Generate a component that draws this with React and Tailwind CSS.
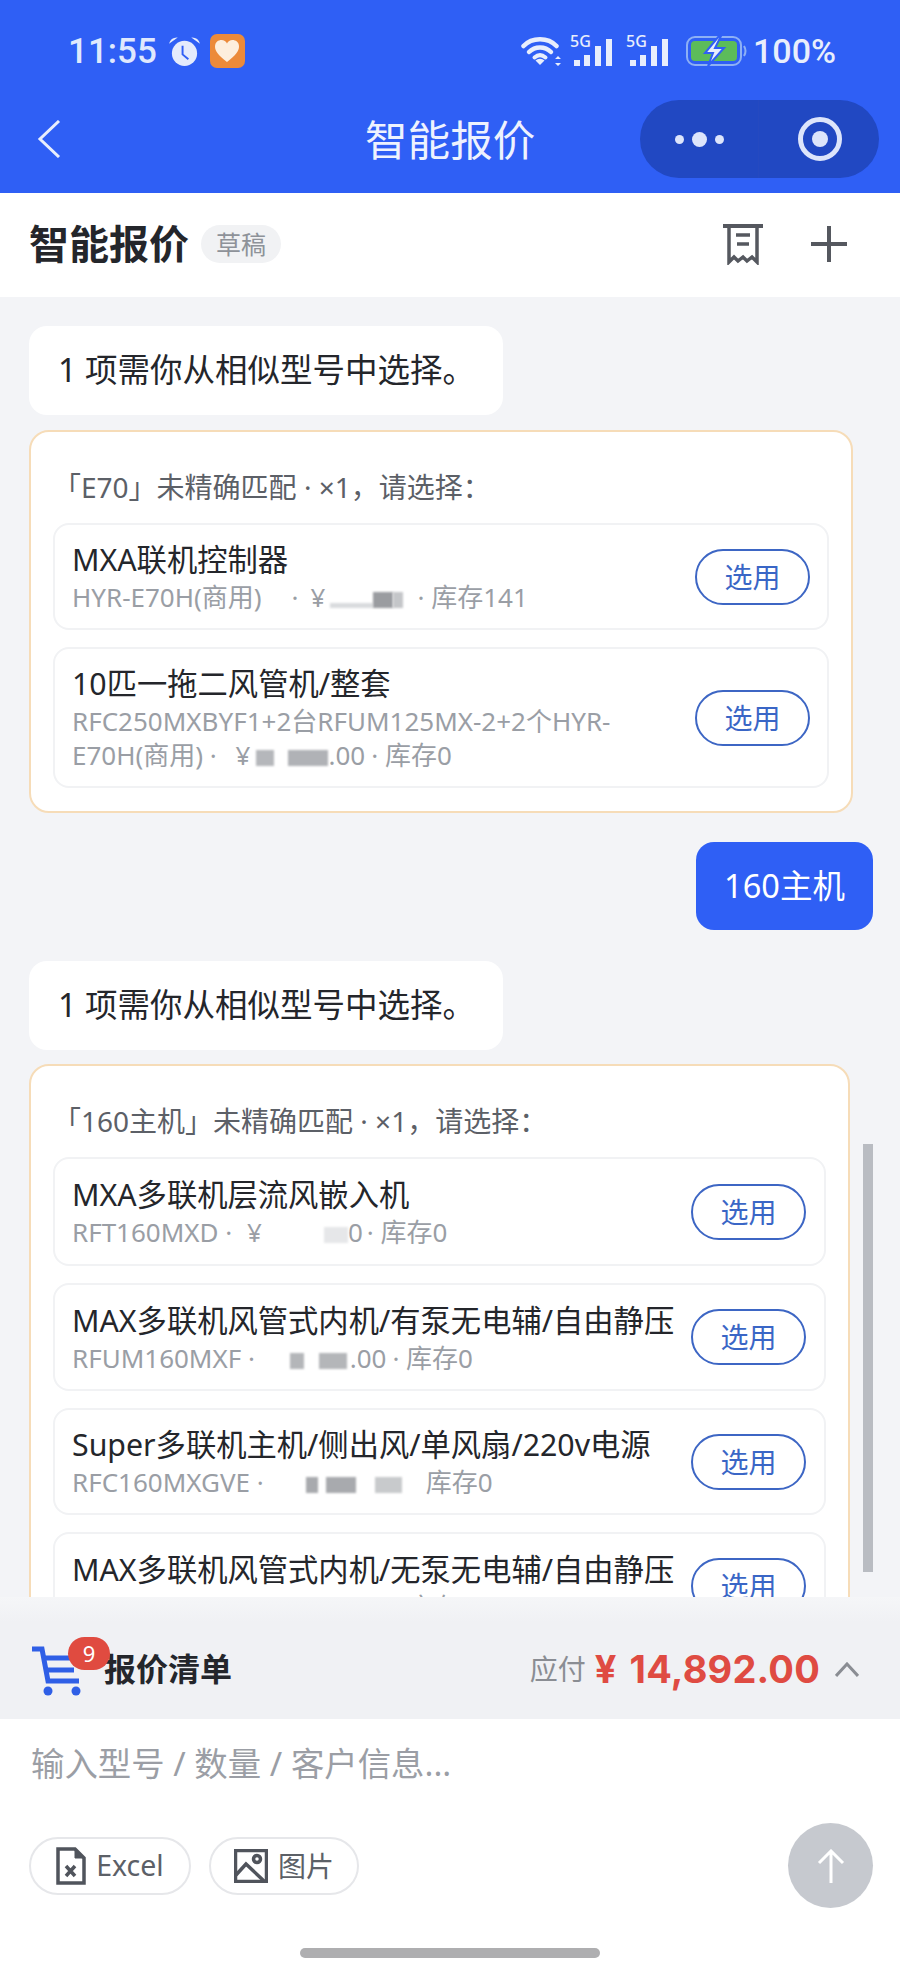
import React from "react";

const FONT = '"Noto Sans","Noto Sans CJK SC",sans-serif';

function Blur({ w, c = "#9a9ca0", ml = 0, h = 16 }) {
  return (
    <span
      className="inline-block blur-[1px] align-[-1px]"
      style={{ width: w, height: h, background: c, marginLeft: ml }}
    />
  );
}

function Pick() {
  return (
    <button className="shrink-0 w-[115px] h-[56px] rounded-full border-2 border-[#3d66c4] bg-white text-[28px] leading-none text-[#3a66c6] flex items-center justify-center">
      选用
    </button>
  );
}

function Row({ title, sub, h, pr = 17 }) {
  return (
    <div className="flex items-center justify-between rounded-[16px] border-2 border-[#f1f2f4] bg-white pl-[17px]" style={{ height: h, paddingRight: pr }}>
      <div className="min-w-0 mt-[2px]">
        <div className="text-[30.3px] leading-[38px] text-[#24262b] whitespace-nowrap">{title}</div>
        <div className="text-[26px] leading-[34px] text-[#9a9ea5] whitespace-nowrap mt-[1px]">{sub}</div>
      </div>
      <Pick />
    </div>
  );
}

function Bubble({ children }) {
  return (
    <div className="w-[474px] h-[89px] rounded-[18px] bg-white flex items-center pl-[29px] text-[32.5px] text-[#24262b] whitespace-nowrap">
      {children}
    </div>
  );
}

function Wifi() {
  return (
    <svg width="42" height="30" viewBox="0 0 42 30" fill="none" stroke="#e8eefc" strokeLinecap="round">
      <path d="M2.5 10 C11 1 27 1 35.5 10" strokeWidth="4.5" />
      <path d="M8 16 C14 10 24 10 30 16" strokeWidth="4.5" />
      <path d="M13.5 21.5 C17 18.5 21 18.5 24.5 21.5" strokeWidth="4" />
      <path d="M19 29 l-4.5 -4.5 a6.5 6.5 0 0 1 9 0 z" fill="#e8eefc" stroke="none" />
      <path d="M37 20 l3 3 h-6 z M37 30 l3 -3 h-6 z" fill="#e8eefc" stroke="none" />
    </svg>
  );
}

function Signal() {
  return (
    <div className="relative w-[47px] h-[30px]">
      <span className="absolute left-0 top-[-3px] text-[16px] leading-[16px] font-medium text-[#e8eefc]">5G</span>
      <svg className="absolute left-0 top-0" width="47" height="30" viewBox="0 0 47 30" fill="#e8eefc">
        <rect x="4" y="24" width="6" height="6" />
        <rect x="14" y="19" width="6" height="11" />
        <rect x="25" y="10" width="6" height="20" />
        <rect x="36" y="3" width="6" height="27" />
      </svg>
    </div>
  );
}

function Battery() {
  return (
    <svg width="62" height="30" viewBox="0 0 62 30">
      <rect x="1" y="1" width="54" height="28" rx="8" fill="none" stroke="#8db0f5" strokeWidth="2" />
      <rect x="5" y="5" width="46" height="20" rx="4" fill="#5cbc5a" />
      <path d="M58 10 q3 5 0 10" fill="none" stroke="#8db0f5" strokeWidth="2" />
      <path d="M33 0 L19 17 H27 L22 30 L38 12 H29 L35 0 Z" fill="#e8eefc" stroke="#2f5ff5" strokeWidth="2" />
    </svg>
  );
}

function StatusBar() {
  return (
    <div className="h-[100px] flex items-start justify-between pl-[68px] pr-[64px] pt-[34px]">
      <div className="flex items-center h-[34px]">
        <span className="text-[35px] leading-none font-medium text-[#dfe8fd] font-['Roboto']">11:55</span>
        <svg className="ml-[11px]" width="33" height="31" viewBox="0 0 34 32">
          <circle cx="17" cy="18" r="13" fill="#e4ebfc" />
          <path d="M1 8 Q3 1 10 1.5 Z M33 8 Q31 1 24 1.5 Z" fill="#e4ebfc" />
          <path d="M15 10 V19 L21 24" fill="none" stroke="#2f5ff5" strokeWidth="2" />
        </svg>
        <div className="ml-[9px] w-[35px] h-[34px] rounded-[7px] bg-[#ec8a3a] flex items-center justify-center">
          <svg width="26" height="24" viewBox="0 0 26 24">
            <path d="M13 23 C4 16 1 12 1 7.5 C1 3 4.5 1 7.5 1 C10 1 12 2.5 13 4.5 C14 2.5 16 1 18.5 1 C21.5 1 25 3 25 7.5 C25 12 22 16 13 23 Z" fill="#fdeedd" />
          </svg>
        </div>
      </div>
      <div className="flex items-center h-[34px]">
        <Wifi />
        <div className="ml-[7px]"><Signal /></div>
        <div className="ml-[9px]"><Signal /></div>
        <div className="ml-[13px]"><Battery /></div>
        <span className="ml-[5px] text-[34px] leading-none font-medium text-[#e8eefc] font-['Roboto']">100%</span>
      </div>
    </div>
  );
}

function NavBar() {
  return (
    <div className="relative h-[93px] flex items-start pl-[37px] pr-[21px] justify-between">
      <svg className="mt-[20px]" width="24" height="38" viewBox="0 0 24 38" fill="none" stroke="#e8eefc" strokeWidth="3">
        <path d="M22 1 L3 19 L22 37" />
      </svg>
      <div className="absolute left-[365px] top-[14px] text-[42.6px] leading-[50px] text-[#eef2fe] w-[170px] text-center whitespace-nowrap">智能报价</div>
      <div className="w-[239px] h-[78px] rounded-full bg-[#2148c2] flex items-center">
        <div className="w-[119px] h-full flex items-center justify-center gap-[8px] border-r border-[#2549c0]">
          <span className="w-[9px] h-[9px] rounded-full bg-[#dde5fb]" />
          <span className="w-[15px] h-[15px] rounded-full bg-[#dde5fb]" />
          <span className="w-[9px] h-[9px] rounded-full bg-[#dde5fb]" />
        </div>
        <div className="flex-1 flex items-center justify-center pl-[2px]">
          <div className="w-[44px] h-[44px] rounded-full border-[5px] border-[#dde5fb] flex items-center justify-center">
            <span className="w-[16px] h-[16px] rounded-full bg-[#dde5fb]" />
          </div>
        </div>
      </div>
    </div>
  );
}

function TopBar() {
  return (
    <div className="h-[104px] bg-white flex items-center justify-between pl-[29px] pr-[53px] pb-[2px] shrink-0">
      <div className="flex items-center">
        <span className="text-[40px] leading-none font-semibold text-[#24262b]">智能报价</span>
        <span className="ml-[12px] w-[80px] h-[38px] rounded-full bg-[#f1f2f4] text-[25px] leading-none text-[#8e9299] flex items-center justify-center">草稿</span>
      </div>
      <div className="flex items-center gap-[48px]">
        <svg width="40" height="42" viewBox="0 0 40 42" fill="none" stroke="#55585f" strokeWidth="4">
          <path d="M0 3 H40" />
          <path d="M6 3 V39 L11 34 L15 38 L20 34 L24 38 L29 34 L34 39 V3" strokeWidth="3.5" />
          <path d="M13 12 H27 M14 21 H26" strokeWidth="3.5" />
        </svg>
        <svg width="36" height="36" viewBox="0 0 36 36" stroke="#55585f" strokeWidth="4">
          <path d="M0 18 H36 M18 0 V36" />
        </svg>
      </div>
    </div>
  );
}

function Chat() {
  return (
    <div className="relative flex-1 min-h-0 overflow-hidden">
      <div className="pl-[29px] pr-[27px] pt-[29px] flex flex-col">
        <Bubble>1 项需你从相似型号中选择。</Bubble>

        <div className="mt-[15px] w-[824px] rounded-[20px] border-2 border-[#f6dcb8] bg-white px-[22px] pt-[34px] pb-[23px]">
          <div className="text-[28px] leading-[42px] text-[#5c6067] whitespace-nowrap">「E70」未精确匹配 · ×1，请选择：</div>
          <div className="mt-[15px] flex flex-col gap-[17px]">
            <Row
              h={107}
              title="MXA联机控制器"
              sub={
                <>
                  HYR-E70H(商用)<span className="ml-[30px]">·</span><span className="ml-[12px]">¥</span><Blur w={43} c="#d9dbde" ml={5} h={5} /><Blur w={20} /><Blur w={10} c="#c4c6c9" /><span className="ml-[14px]">· 库存141</span>
                </>
              }
            />
            <Row
              h={141}
              title="10匹一拖二风管机/整套"
              sub={
                <>
                  RFC250MXBYF1+2台RFUM125MX-2+2个HYR-
                  <br />
                  E70H(商用) · <span className="ml-[12px]">¥</span><Blur w={18} c="#b5b7bb" ml={6} /><Blur w={40} c="#b0b2b6" ml={14} />.00<span className="ml-[6px]">· 库存0</span>
                </>
              }
            />
          </div>
        </div>

        <div className="mt-[29px] self-end w-[177px] h-[88px] rounded-[18px] bg-[#2f5ff5] text-white text-[32.5px] flex items-center justify-center whitespace-nowrap">160主机</div>

        <div className="mt-[31px]"><Bubble>1 项需你从相似型号中选择。</Bubble></div>

        <div className="mt-[14px] w-[821px] rounded-[20px] border-2 border-[#f6dcb8] bg-white px-[22px] pt-[34px] pb-[23px]">
          <div className="text-[28px] leading-[42px] text-[#5c6067] whitespace-nowrap">「160主机」未精确匹配 · ×1，请选择：</div>
          <div className="mt-[15px] flex flex-col gap-[17px]">
            <Row
              h={109}
              pr={18}
              title="MXA多联机层流风嵌入机"
              sub={
                <>
                  RFT160MXD · <span className="ml-[8px]">¥</span><Blur w={24} c="#e6e7e9" ml={62} />0<span className="ml-[4px]">· 库存0</span>
                </>
              }
            />
            <Row
              h={108}
              pr={18}
              title="MAX多联机风管式内机/有泵无电辅/自由静压"
              sub={
                <>
                  RFUM160MXF · <Blur w={14} c="#b4b6b9" ml={28} /><Blur w={28} c="#b4b6b9" ml={15} /><span className="ml-[3px]">.00</span><span className="ml-[6px]">· 库存0</span>
                </>
              }
            />
            <Row
              h={107}
              pr={18}
              title="Super多联机主机/侧出风/单风扇/220v电源"
              sub={
                <>
                  RFC160MXGVE ·<Blur w={12} c="#a8aaae" ml={42} /><Blur w={30} c="#a8aaae" ml={8} /><Blur w={27} c="#c8cacc" ml={19} /><span className="ml-[24px]">库存0</span>
                </>
              }
            />
            <Row
              h={108}
              pr={18}
              title="MAX多联机风管式内机/无泵无电辅/自由静压"
              sub="RFUM160MXF · ¥ 1,000.00 · 库存0"
            />
          </div>
        </div>
      </div>
      <div className="absolute left-[863px] top-[847px] w-[10px] h-[428px] bg-[#b9bcc2]" />
    </div>
  );
}

function Cart() {
  return (
    <svg width="50" height="50" viewBox="0 0 50 50" fill="none" stroke="#2f5fe6" strokeWidth="5">
      <path d="M0 3 H10 L16 35 H47" />
      <path d="M12 12 H44 M14 24 H42" />
      <circle cx="16" cy="45" r="4.5" fill="#2f5fe6" stroke="none" />
      <circle cx="44" cy="45" r="4.5" fill="#2f5fe6" stroke="none" />
    </svg>
  );
}

function Summary() {
  return (
    <div className="shrink-0">
      <div className="h-[25px] bg-gradient-to-b from-[#f5f6f8] to-[#f0f1f4]" />
      <div className="h-[97px] bg-[#f0f1f4] flex items-center justify-between pl-[32px] pr-[41px]">
        <div className="flex items-center">
          <div className="relative w-[72px] h-[50px]">
            <Cart />
            <span className="absolute left-[36px] top-[-9px] w-[42px] h-[33px] rounded-full bg-[#e04b40] text-white text-[22px] leading-none flex items-center justify-center">9</span>
          </div>
          <span className="text-[32px] leading-none font-semibold text-[#24262b] -mt-[3px]">报价清单</span>
        </div>
        <div className="flex items-center -mt-[3px]">
          <span className="text-[28px] leading-none text-[#8a8d93]">应付</span>
          <span className="ml-[9px] text-[38px] leading-none font-bold text-[#df4b42] font-['Inter'] tracking-[0.2px]"><span className="mr-[13px]">¥</span>14,892.00</span>
          <svg className="ml-[15px]" width="24" height="15" viewBox="0 0 24 15" fill="none" stroke="#8a8d93" strokeWidth="3">
            <path d="M1 14 L12 2 L23 14" />
          </svg>
        </div>
      </div>
    </div>
  );
}

function Composer() {
  return (
    <div className="h-[259px] bg-white shrink-0 relative flex flex-col">
      <div className="pl-[31px] pt-[24px] text-[33.4px] leading-[40px] text-[#9b9ea5] whitespace-nowrap">输入型号 / 数量 / 客户信息...</div>
      <div className="flex items-center justify-between pl-[29px] pr-[27px] mt-[40px]">
        <div className="flex items-center gap-[18px]">
          <div className="w-[162px] h-[58px] rounded-full border-2 border-[#e6e7ea] flex items-center justify-center gap-[10px] text-[28.5px] leading-none text-[#5c6067]">
            <svg width="30" height="38" viewBox="0 0 30 38" fill="none" stroke="#50545c" strokeWidth="3.5">
              <path d="M2 2 H19 L28 11 V36 H2 Z" />
              <path d="M19 2 V11 H28" fill="#50545c" strokeWidth="1" />
              <path d="M10 19 L19 29 M19 19 L10 29" strokeWidth="3.5" />
            </svg>
            Excel
          </div>
          <div className="w-[150px] h-[58px] rounded-full border-2 border-[#e6e7ea] flex items-center justify-center gap-[10px] text-[28px] leading-none text-[#5c6067]">
            <svg width="34" height="34" viewBox="0 0 34 34" fill="none" stroke="#50545c" strokeWidth="3.5">
              <rect x="1.5" y="1.5" width="31" height="31" />
              <path d="M2 26 L12 15 L30 32" />
              <circle cx="23" cy="10" r="3.5" />
            </svg>
            图片
          </div>
        </div>
        <div className="w-[85px] h-[85px] rounded-full bg-[#c6c9cf] flex items-center justify-center">
          <svg width="28" height="34" viewBox="0 0 28 34" fill="none" stroke="#fff" strokeWidth="3">
            <path d="M14 34 V2 M2 14 L14 2 L26 14" />
          </svg>
        </div>
      </div>
      <div className="absolute left-[300px] top-[229px] w-[300px] h-[10px] rounded-full bg-[#aeaeb0]" />
    </div>
  );
}

export default function App() {
  return (
    <div className="w-[900px] h-[1978px] bg-[#f3f4f7] flex flex-col overflow-hidden" style={{ fontFamily: FONT }}>
      <div className="bg-[#2f5ff5] shrink-0">
        <StatusBar />
        <NavBar />
      </div>
      <TopBar />
      <Chat />
      <Summary />
      <Composer />
    </div>
  );
}
